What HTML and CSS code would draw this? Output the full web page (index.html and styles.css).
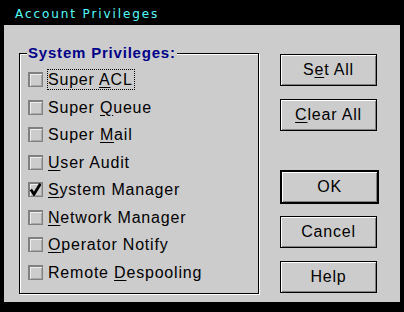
FILE: index.html
```html
<!DOCTYPE html>
<html lang="en">
<head>
  <meta charset="UTF-8">
  <title>Account Privileges</title>
  <link rel="stylesheet" href="styles.css">
</head>
<body>
  <div class="window">
    <div class="titlebar">Account Privileges</div>

    <div class="dialog">
      <!-- privilege checkboxes -->
      <div class="group">
        <span class="legend">System Privileges:</span>
        <div class="row"><span class="box"></span><span class="label focus">Super <u>A</u>CL</span></div>
        <div class="row"><span class="box"></span><span class="label">Super <u>Q</u>ueue</span></div>
        <div class="row"><span class="box"></span><span class="label">Super <u>M</u>ail</span></div>
        <div class="row"><span class="box"></span><span class="label"><u>U</u>ser Audit</span></div>
        <div class="row">
          <span class="box">
            <svg class="check" viewBox="0 0 13 13" width="13" height="13"><path d="M1.8 6.5 L5 11.2 L11.4 0.8" /></svg>
          </span>
          <span class="label"><u>S</u>ystem Manager</span>
        </div>
        <div class="row"><span class="box"></span><span class="label"><u>N</u>etwork Manager</span></div>
        <div class="row"><span class="box"></span><span class="label"><u>O</u>perator Notify</span></div>
        <div class="row"><span class="box"></span><span class="label">Remote <u>D</u>espooling</span></div>
      </div>

      <!-- push buttons -->
      <div class="buttons">
        <button class="btn">S<u>e</u>t All</button>
        <button class="btn clear-btn"><u>C</u>lear All</button>
        <button class="btn ok-btn">OK</button>
        <button class="btn cancel-btn">Cancel</button>
        <button class="btn help-btn">Help</button>
      </div>
    </div>
  </div>
</body>
</html>
```

FILE: styles.css
```css
body {
  margin: 0;
  background-color: #000;
  font-family: 'Liberation Sans', Arial, sans-serif;
}
.window {
  width: 404px;
  height: 312px;
}
.titlebar {
  height: 25px;
  box-sizing: border-box;
  padding: 7px 0 0 15px;
  line-height: 14px;
  font-family: 'DejaVu Sans', sans-serif;
  font-size: 12px;
  letter-spacing: 1.9px;
  color: #55ffff;
}
.dialog {
  display: flex;
  margin: 0 4px;
  height: 277px;
  box-sizing: border-box;
  padding: 28px 0 0 15px;
  background-color: #cccccc;
}
.group {
  position: relative;
  width: 240px;
  height: 241px;
  box-sizing: border-box;
  padding: 11.7px 0 0 8px;
  border: 1px solid #000;
  box-shadow: inset 1px 1px 0 #fff, 1px 1px 0 #fff;
}
.legend {
  position: absolute;
  top: -10px;
  left: 7px;
  padding: 0 1px;
  background-color: #cccccc;
  color: #000088;
  font-size: 15px;
  font-weight: bold;
  letter-spacing: 0.8px;
  line-height: 17px;
}
.row {
  display: flex;
  align-items: center;
  height: 27.57px;
}
.box {
  width: 15px;
  height: 15px;
  box-sizing: border-box;
  margin-right: 4px;
  border: 1px solid #808080;
  box-shadow: inset 1px 1px 0 #808080, inset 2px 2px 0 #eeeeee, inset -1px -1px 0 #a8a8a8;
  background-color: #cccccc;
}
.check {
  display: block;
}
.check path {
  fill: none;
  stroke: #000;
  stroke-width: 2.8;
}
.label {
  border: 1px dotted transparent;
  padding-right: 1px;
  font-size: 16px;
  letter-spacing: 0.8px;
  line-height: 19px;
  color: #000;
}
.label.focus {
  border-color: #000;
}
u {
  text-underline-offset: 2px;
}
.buttons {
  display: flex;
  flex-direction: column;
  margin: 1px 0 0 21px;
}
.btn {
  width: 97px;
  height: 32px;
  padding: 0;
  border: 1px solid #000;
  background-color: #cccccc;
  box-shadow: inset 1px 1px 0 #fff, inset -1px -1px 0 #808080;
  font-family: 'Liberation Sans', Arial, sans-serif;
  font-size: 16px;
  letter-spacing: 0.8px;
  color: #000;
}
.clear-btn {
  margin-top: 13px;
}
.ok-btn {
  width: 99px;
  height: 34px;
  margin-top: 39px;
  border-width: 2px;
}
.cancel-btn {
  margin-top: 12px;
}
.help-btn {
  margin-top: 13px;
}
```
